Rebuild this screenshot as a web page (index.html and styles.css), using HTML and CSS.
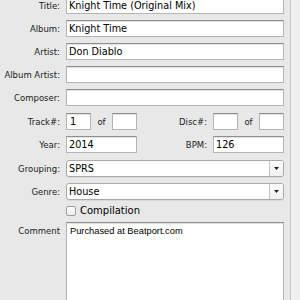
FILE: index.html
```html
<!DOCTYPE html>
<html>
<head>
<meta charset="utf-8">
<link rel="stylesheet" href="styles.css">
</head>
<body>
<div class="window">
  <div class="form">
    <div class="row"><div class="label">Title:</div><div class="field">Knight Time (Original Mix)</div></div>
    <div class="row"><div class="label">Album:</div><div class="field">Knight Time</div></div>
    <div class="row"><div class="label">Artist:</div><div class="field">Don Diablo</div></div>
    <div class="row"><div class="label">Album Artist:</div><div class="field"></div></div>
    <div class="row"><div class="label">Composer:</div><div class="field"></div></div>
    <div class="row shift">
      <div class="label">Track#:</div>
      <div class="pair"><div class="field small">1</div><span class="of">of</span><div class="field small"></div></div>
      <div class="label mid">Disc#:</div>
      <div class="pair"><div class="field small"></div><span class="of">of</span><div class="field small"></div></div>
    </div>
    <div class="row">
      <div class="label">Year:</div><div class="field half">2014</div>
      <div class="label mid">BPM:</div><div class="field half">126</div>
    </div>
    <div class="row shift"><div class="label">Grouping:</div><div class="popup"><span class="val">SPRS</span><span class="btn"><svg width="5" height="3" viewBox="0 0 5 3"><path d="M0 0H5L2.5 3Z" fill="#222"/></svg></span></div></div>
    <div class="row"><div class="label">Genre:</div><div class="popup"><span class="val">House</span><span class="btn"><svg width="5" height="3" viewBox="0 0 5 3"><path d="M0 0H5L2.5 3Z" fill="#222"/></svg></span></div></div>
    <div class="row check"><div class="label"></div><span class="box"></span><span class="ctext">Compilation</span></div>
    <div class="row tall"><div class="label top">Comment</div><div class="comment">Purchased at Beatport.com</div></div>
  </div>
  <div class="edge"></div>
</div>
</body>
</html>
```
FILE: styles.css
```css
html, body {
  margin: 0;
  padding: 0;
  background: #e8e8e8;
  overflow: hidden;
}
.window {
  display: flex;
  width: 300px;
  height: 300px;
  overflow: hidden;
}
.form {
  width: 284px;
  padding-right: 6px;
  margin-top: -3px;
  display: flex;
  flex-direction: column;
  gap: 6px;
  background: #e8e8e8;
}
.edge {
  flex: 1;
  border-left: 1px solid #c6c6c6;
  background: #efefef;
}
.row {
  display: flex;
  align-items: flex-start;
  height: 17px;
}
.row.shift { margin-top: 1px; }
.row.check { height: 10px; align-items: center; }
.row.tall { height: 78px; }
.label {
  width: 60px;
  margin-right: 6px;
  flex: none;
  text-align: right;
  font-family: "DejaVu Sans", sans-serif;
  font-size: 8.5px;
  line-height: 17px;
  padding-top: 1px;
  box-sizing: border-box;
  color: #222;
  white-space: nowrap;
}
.label.mid { width: 70px; }
.label.top { line-height: 12px; padding-top: 3px; }
.field {
  flex: 1;
  height: 17px;
  box-sizing: border-box;
  background: #fff;
  border: 1px solid #b4b4b4;
  border-top-color: #8f8f8f;
  box-shadow: inset 0 1px 0 #e2e2e2;
  padding-left: 2px;
  font-family: "DejaVu Sans", sans-serif;
  font-size: 9.7px;
  line-height: 15px;
  color: #000;
  white-space: nowrap;
  overflow: hidden;
}
.field.half { flex: none; width: 71px; }
.field.small { flex: none; width: 25px; padding-left: 3px; }
.pair {
  display: flex;
  width: 71px;
  flex: none;
}
.of {
  width: 21px;
  text-align: center;
  font-family: "DejaVu Sans", sans-serif;
  font-size: 8.5px;
  line-height: 17px;
  padding-top: 1px;
  box-sizing: border-box;
  color: #222;
}
.popup {
  flex: 1;
  height: 17px;
  box-sizing: border-box;
  display: flex;
  background: #fff;
  border: 1px solid #a9a9a9;
  border-radius: 3px;
  box-shadow: 0 1px 0 #d8d8d8;
  font-family: "DejaVu Sans", sans-serif;
  font-size: 9.7px;
  line-height: 15px;
  color: #000;
}
.popup .val {
  flex: 1;
  padding-left: 2px;
}
.popup .btn {
  width: 13px;
  border-left: 1px solid #c4c4c4;
  display: flex;
  align-items: center;
  justify-content: center;
  background: linear-gradient(#fdfdfd, #f0f0f0);
  border-radius: 0 2px 2px 0;
}
.box {
  width: 10px;
  height: 10px;
  box-sizing: border-box;
  border: 1px solid #9e9e9e;
  border-radius: 2px;
  background: linear-gradient(#ffffff, #ececec);
  margin-right: 4px;
}
.ctext {
  font-family: "DejaVu Sans", sans-serif;
  font-size: 10px;
  line-height: 10px;
  color: #000;
}
.comment {
  flex: 1;
  height: 78px;
  box-sizing: border-box;
  background: #fff;
  border: 1px solid #b4b4b4;
  border-top-color: #8f8f8f;
  border-bottom: 0;
  box-shadow: inset 0 1px 0 #e2e2e2;
  padding: 2px 0 0 3px;
  font-family: "Liberation Sans", Arial, sans-serif;
  font-size: 9.3px;
  line-height: 12px;
  color: #000;
}
```
